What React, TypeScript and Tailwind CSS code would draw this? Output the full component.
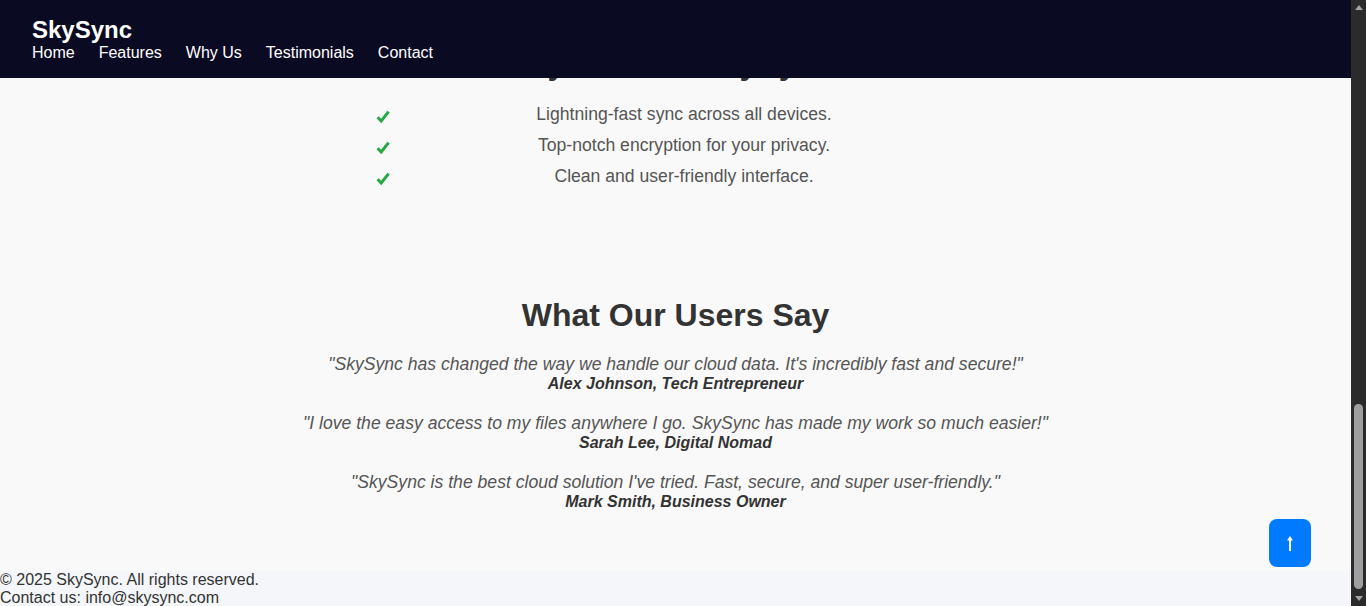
const navLinks = ["Home", "Features", "Why Us", "Testimonials", "Contact"];

const reasons = [
  "Lightning-fast sync across all devices.",
  "Top-notch encryption for your privacy.",
  "Clean and user-friendly interface.",
];

const testimonials = [
  {
    quote: "\"SkySync has changed the way we handle our cloud data. It's incredibly fast and secure!\"",
    author: "Alex Johnson, Tech Entrepreneur",
  },
  {
    quote: "\"I love the easy access to my files anywhere I go. SkySync has made my work so much easier!\"",
    author: "Sarah Lee, Digital Nomad",
  },
  {
    quote: "\"SkySync is the best cloud solution I've tried. Fast, secure, and super user-friendly.\"",
    author: "Mark Smith, Business Owner",
  },
];

function Check() {
  return (
    <svg viewBox="0 0 14 13" className="mt-[3px] block h-[13px] w-[14px]" aria-hidden={true}>
      <path d="M1.6 7.2 L5.2 11 L12.6 1.6" fill="none" stroke="#28a745" strokeWidth="3" strokeLinejoin="miter" />
    </svg>
  );
}

export default function App() {
  return (
    <div className="flex h-[606px] w-full overflow-hidden bg-[#f9f9f9] font-['Liberation_Sans',Arial,sans-serif] text-[#333]">
      <div className="relative flex min-w-0 flex-1 flex-col">
        {/* fixed header sits over the scrolled content */}
        <header className="absolute inset-x-0 top-0 z-10 h-[78px] bg-[#0a0a23] px-8 pt-[16px] text-white">
          <div className="text-[24px] font-bold leading-[27.6px]">SkySync</div>
          <nav className="flex gap-6 text-[16px] leading-[18.4px]">
            {navLinks.map((link) => (
              <a key={link} href="#">
                {link}
              </a>
            ))}
          </nav>
        </header>

        <main className="flex-1">
          <section>
            <h2 className="mt-[45px] text-center text-[32px] font-bold leading-[36px] text-[#333]">
              Why Choose SkySync?
            </h2>
            <ul className="mx-auto mt-[18px] w-[600px]">
              {reasons.map((reason) => (
                <li key={reason} className="flex h-[31px] items-center">
                  <span className="flex w-[17px]">
                    <Check />
                  </span>
                  <span className="flex-1 text-center text-[17.6px] text-[#555]">{reason}</span>
                </li>
              ))}
            </ul>
          </section>

          <section className="mt-[105px] text-center">
            <h2 className="text-[32px] font-bold leading-[36px] text-[#333]">What Our Users Say</h2>
            <div className="mt-[21px] flex flex-col gap-5">
              {testimonials.map((t) => (
                <div key={t.author}>
                  <p className="text-[17.6px] italic leading-[20px] text-[#555]">{t.quote}</p>
                  <p className="text-[16px] font-bold italic leading-[19px] text-[#333]">{t.author}</p>
                </div>
              ))}
            </div>
          </section>
        </main>

        <footer className="h-[35px] shrink-0 bg-[#f4f6f9] text-[16px] leading-[18.4px] text-[#333]">
          <p>© 2025 SkySync. All rights reserved.</p>
          <p>Contact us: info@skysync.com</p>
        </footer>

        <button className="absolute bottom-[39px] right-10 flex h-[48px] w-[42px] items-center justify-center rounded-lg bg-[#007bff]">
          <svg viewBox="0 0 6 15" className="h-[15px] w-[6px]" aria-hidden={true}>
            <path d="M3 0 L6 4.5 L4 4.5 L4 15 L2 15 L2 4.5 L0 4.5 Z" fill="#fff" />
          </svg>
        </button>
      </div>

      {/* scrollbar, scrolled to the bottom */}
      <div className="flex w-[15px] shrink-0 flex-col items-center bg-[#2b2b2b] py-[5px]">
        <div className="h-0 w-0 border-x-[4px] border-b-[5px] border-x-transparent border-b-[#a3a3a3]" />
        <div className="mt-[394px] h-[185px] w-[9px] rounded-full bg-[#9f9f9f]" />
        <div className="mt-auto h-0 w-0 border-x-[4px] border-t-[5px] border-x-transparent border-t-[#a3a3a3]" />
      </div>
    </div>
  );
}
